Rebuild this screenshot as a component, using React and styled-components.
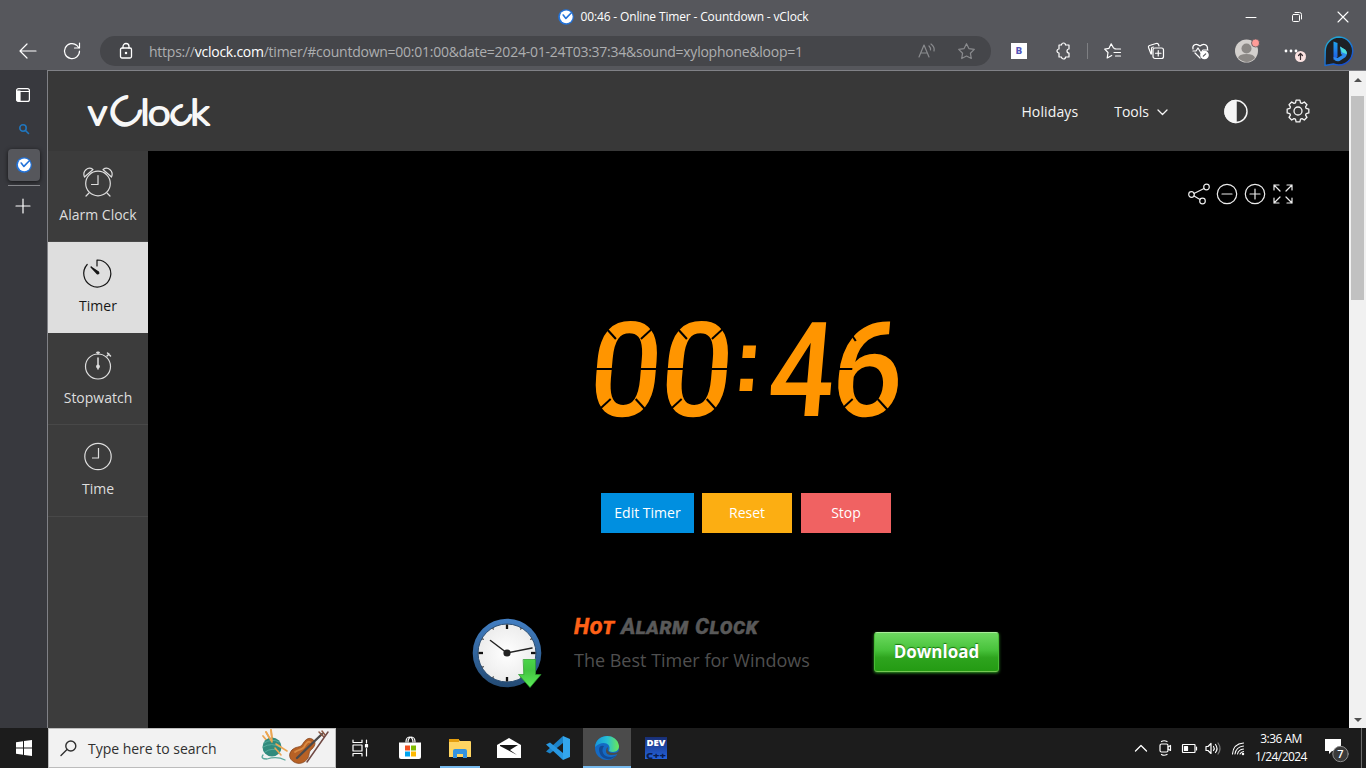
import React from "react";
import styled, { createGlobalStyle, css } from "styled-components";

const GlobalStyle = createGlobalStyle`
  * { box-sizing: border-box; }
  body { margin: 0; background: #000; overflow: hidden; font-family: "Open Sans", "Noto Sans", sans-serif; }
  svg { display: block; flex: none; overflow: visible; }
`;

const Screen = styled.div`
  width: 1366px; height: 768px; display: flex; flex-direction: column; overflow: hidden; color: #fff;
`;

/* ---------- browser chrome ---------- */
const TitleBar = styled.header`
  height: 34px; background: #56575c; display: grid; grid-template-columns: 1fr auto 1fr; align-items: center;
`;
const TitleText = styled.div`
  grid-column: 2; display: flex; align-items: center; gap: 7px; padding-bottom: 1px;
  font-size: 12px; letter-spacing: ${(p) => p.$track}px; white-space: nowrap; height: 32px;
`;
const WindowControls = styled.div`display: flex; justify-self: end; height: 32px;`;
const ControlCell = styled.div`width: 46px; display: flex; align-items: center; justify-content: center;`;

const Toolbar = styled.div`
  height: 36px; background: #56575c; display: flex; align-items: center; padding: 0 5px 2px 6px;
`;
const Cell = styled.div`
  width: ${(p) => p.$w || 44}px; height: 30px; flex: none; display: flex; align-items: center; justify-content: center;
  margin-left: ${(p) => p.$gap || 0}px;
`;
const AddressBar = styled.div`
  width: 891px; height: 30px; margin: 0 0 0 6px; border-radius: 15px; background: #45464a; display: flex; align-items: center;
  padding: 0 16px 0 20px;
`;
const Url = styled.div`
  flex: 1; margin-left: 17px; font-size: 14px; letter-spacing: -0.25px; color: #adaeb0; white-space: nowrap;
  span { color: #fff; }
`;
const AddressIcons = styled.div`display: flex; gap: 23px; align-items: center; color: #8a8b8e;`;
const Divider = styled.div`width: 1px; height: 16px; background: #7e7f83; margin: 0 3px 0 2px;`;
const ExtensionTile = styled.div`
  width: 16px; height: 16px; background: #fff; color: #5355b8; font: bold 9px/16px "DejaVu Sans", sans-serif; text-align: center;
`;

const Body = styled.div`height: 658px; display: flex;`;
const TabStrip = styled.nav`
  width: 47px; background: #38393e; display: flex; flex-direction: column; align-items: center; padding-top: 17px;
`;
const StripItem = styled.div`
  width: 32px; height: ${(p) => p.$h}px; padding-top: ${(p) => p.$drop || 0}px; padding-right: ${(p) => p.$pull || 0}px;
  display: flex; align-items: center; justify-content: center; flex: none;
  ${(p) => p.$active && css`background: #56575c; border-radius: 4px; box-shadow: 0 1px 4px rgba(0,0,0,.65);`}
`;
const StripRule = styled.div`width: 32px; height: 1px; background: #85868a; margin-top: 4px;`;

/* ---------- web page ---------- */
const Page = styled.div`
  width: 1302px; border-top: 1px solid #808186; border-left: 1px solid #808186; display: flex; flex-direction: column;
`;
const SiteHeader = styled.header`
  height: 80px; flex: none; background: #383838; display: flex; align-items: center; padding: 0 39px 0 36px;
`;
const SiteNav = styled.nav`
  margin-left: auto; display: flex; align-items: center; font-size: 14px; color: #f5f5f5;
`;
const NavLink = styled.span`
  display: flex; align-items: center; gap: 8px; margin-right: ${(p) => p.$after}px; letter-spacing: ${(p) => p.$track || 0}px;
`;
const Content = styled.div`flex: 1; display: flex; min-height: 0;`;
const SideMenu = styled.aside`width: 100px; background: #3c3c3c;`;
const MenuItem = styled.div`
  height: ${(p) => p.$h}px; border-bottom: 1px solid ${(p) => (p.$active ? "#dedede" : "#484848")};
  background: ${(p) => (p.$active ? "#dedede" : "transparent")}; color: ${(p) => (p.$active ? "#161616" : "#dedede")};
  display: flex; flex-direction: column; align-items: center; padding-top: ${(p) => p.$top || 16}px;
  font-size: 14px; line-height: 19px;
  span { margin-top: 8px; }
`;
const Stage = styled.main`flex: 1; background: #000; display: flex; flex-direction: column;`;
const ViewTools = styled.div`display: flex; justify-content: flex-end; gap: 6px; padding: 32px 55.5px 0 0; color: #ececec;`;
const Display = styled.div`margin: 116px 0 0 448px; height: 97px;`;
const Buttons = styled.div`display: flex; margin: 75px 0 0 453px;`;
const Button = styled.button`
  width: ${(p) => p.$w}px; height: 40px; border: 0; padding: 0 0 1px; margin-right: ${(p) => p.$after || 0}px;
  background: ${(p) => p.$bg}; color: #fff; font: 14px "Open Sans", sans-serif;
`;
const Promo = styled.section`display: flex; margin: 85px 0 0 325px;`;
const PromoCopy = styled.div`margin-left: 31px; width: 300px;`;
const PromoName = styled.div`
  font: italic 800 22px/24px "Roboto", sans-serif; font-variant: small-caps; color: #595959; white-space: nowrap;
  margin-top: -3px; margin-bottom: 1px; letter-spacing: 0.6px; -webkit-text-stroke: 0.4px currentColor;
  b { color: #ff6117; font-weight: inherit; }
`;
const PromoLine = styled.div`
  font-size: 18px; line-height: 24px; color: #4f4f4f; margin-top: 9px; white-space: nowrap;
`;
const Download = styled.button`
  width: 125px; height: 40px; margin-top: 14px; border: 1px solid #48bd36; border-top-color: #a8ed98; border-bottom-color: #74c752;
  border-radius: 3px; padding: 0 0 2px; background: linear-gradient(#6dda60, #48c23b 45%, #2ea41e 65%, #249b13);
  color: #fff; font: bold 17px "Open Sans", sans-serif; text-shadow: 0 -1px 1px #17750c; box-shadow: 0 1px 3px #2f9b24;
`;
const ScrollBar = styled.div`
  width: 17px; background: #f1f1f1; border-top: 1px solid #808186; display: flex; flex-direction: column; align-items: center;
`;
const Thumb = styled.div`width: 13px; height: 204px; background: #c1c1c1; margin-bottom: auto;`;
const Arrow = styled.div`
  width: 0; height: 0; border: 4px solid transparent; margin: ${(p) => (p.$up ? "3px 0 14px" : "0 0 2px")};
  ${(p) => (p.$up ? "border-bottom-color: #505050;" : "border-top-color: #505050;")}
`;

/* ---------- taskbar ---------- */
const TaskBar = styled.footer`height: 40px; background: #1c1c1c; display: flex; align-items: stretch;`;
const TaskCell = styled.div`
  width: ${(p) => p.$w}px; display: flex; align-items: center; justify-content: center; flex: none;
  background: ${(p) => (p.$active ? "#4b4b4b" : "transparent")};
  box-shadow: ${(p) => (p.$active ? "inset 0 -2px #76b9ed" : "none")};
`;
const RunningCell = styled(TaskCell)`
  background: linear-gradient(#76b9ed, #76b9ed) 50% 100% / 40px 2px no-repeat;
`;
const SearchBox = styled.div`
  width: 288px; background: #f2f2f2; border: 1px solid #bcbcbc; color: #303030; display: flex; align-items: center;
  padding: 0 4px 0 11px; font-size: 14px; letter-spacing: -0.02px;
  span { margin-left: 11px; margin-right: auto; }
`;
const Tray = styled.div`margin-left: auto; display: flex; align-items: center; padding-right: 4px;`;
const Clock = styled.div`
  width: 60px; text-align: center; font-size: 12px; line-height: 18px; letter-spacing: -0.55px; margin-right: 2px; white-space: nowrap;
`;
const DesktopEdge = styled.div`width: 1px; height: 40px; background: #6b6b6b;`;

const Icon = ({ w = 24, h = w, sw = 1.2, children }) => (
  <svg width={w} height={h} viewBox={`0 0 ${w} ${h}`} fill="none" stroke="currentColor" strokeWidth={sw} strokeLinecap="round" strokeLinejoin="round">
    {children}
  </svg>
);

const Favicon = () => (
  <Icon w={16} sw={0}>
    <circle cx="8" cy="8" r="7.8" fill="#2373d9" />
    <circle cx="8.3" cy="7.8" r="6.4" fill="#fff" />
    <path d="M5.2 6l2.7 3.4L13.6 3.5" stroke="#2373d9" strokeWidth="1.6" />
  </Icon>
);

const logoLetters = [
  ["v", 40, 19], ["l", 92.5, 9], ["o", 100, 22.500], ["k", 142.500, 19],
];

const Logo = () => (
  <svg width="130" height="40" viewBox="36 0 130 40" fill="#f7f7f7" stroke="#f7f7f7" strokeWidth="2.2" strokeLinejoin="round" fontFamily="Lato" fontWeight="300" fontSize="35">
    {logoLetters.map(([ch, x, width]) => (
      <text key={ch} x={x} y="33.5" textLength={width} lengthAdjust="spacingAndGlyphs">{ch}</text>
    ))}
    <g transform="rotate(-42 77 20)"><text x="60.5" y="34" fontSize="37.5" textLength="30" lengthAdjust="spacingAndGlyphs">C</text></g>
    <g transform="rotate(-42 132.5 25)"><text x="121.5" y="33.5" textLength="21" lengthAdjust="spacingAndGlyphs">c</text></g>
  </svg>
);

const digits = [
  { ch: "0", x: -6, w: 72 },
  { ch: "0", x: 65, w: 72 },
  { ch: "4", x: 173, w: 66 },
  { ch: "6", x: 236, w: 72 },
];
const cornerCuts = (x) => [
  [x + 5, 2, x + 21, 18], [x + 62, 2, x + 46, 18], [x + 5, 94, x + 21, 78], [x + 62, 94, x + 46, 78],
];
const sideCuts = (x) => [[x, 48, x + 20, 48], [x + 47, 48, x + 67, 48]];
const ledCuts = [...[-4, 67].flatMap(cornerCuts), ...[-3, 68].flatMap(sideCuts), ...cornerCuts(238).slice(2), [238, 48, 256, 48], [245, 4, 257, 20]];
const Led = () => (
  <svg width="304" height="97" viewBox="0 0 304 97">
    <g transform="translate(4.5 0) skewX(-5)">
      <g fill="#ff9500" fontFamily="Roboto" fontWeight="500" fontSize="132">
        {digits.map((d, i) => (
          <text key={i} x={d.x} y="95" textLength={d.w} lengthAdjust="spacingAndGlyphs">{d.ch}</text>
        ))}
        <text x="136.5" y="70" fontFamily="Liberation Sans" fontWeight="700" fontSize="90">:</text>
      </g>
      <g stroke="#000" strokeWidth="2">
        {ledCuts.map((c, i) => <line key={i} x1={c[0]} y1={c[1]} x2={c[2]} y2={c[3]} />)}
      </g>
    </g>
  </svg>
);

const gearPath = (() => {
  const pts = [];
  for (let i = 0; i < 8; i++) {
    [[-17, 8.6], [-10, 11], [10, 11], [17, 8.6]].forEach(([deg, r]) => {
      const a = ((i * 45 + deg) * Math.PI) / 180;
      pts.push(`${(12 + r * Math.sin(a)).toFixed(2)} ${(12 - r * Math.cos(a)).toFixed(2)}`);
    });
  }
  return `M${pts.join("L")}Z`;
})();

const ClockFace = () => (
  <Icon w={70} sw={0}>
    <defs>
      <linearGradient id="rim" x2="0" y2="1"><stop stopColor="#427fc4" /><stop offset="1" stopColor="#234a73" /></linearGradient>
      <radialGradient id="dial"><stop stopColor="#fff" /><stop offset="1" stopColor="#ececec" /></radialGradient>
      <linearGradient id="drop" x2="0" y2="1"><stop stopColor="#4ad548" /><stop offset=".4" stopColor="#43c541" /><stop offset="1" stopColor="#5cec59" /></linearGradient>
    </defs>
    <circle cx="34" cy="35" r="34.3" fill="url(#rim)" />
    <circle cx="34" cy="35" r="29" fill="url(#dial)" stroke="#2c4e72" strokeWidth="1" />
    {[...Array(12)].map((_, i) => (
      <line key={i} x1="34" x2="34" y1="6.5" y2={i % 3 ? 8 : 11} stroke="#111" strokeWidth={i % 3 ? 1 : 2.3} transform={`rotate(${i * 30} 34 35)`} strokeLinecap="butt" />
    ))}
    <path d="M17.5 22.5L34 35L59 30" stroke="#222" strokeWidth="1.5" />
    <circle cx="34" cy="35" r="3.6" fill="#222" />
    <path d="M50.5 41.5h12v15h5.5L57 69.5 45.5 56.5h5z" fill="url(#drop)" stroke="#2b9a2c" strokeWidth=".7" />
  </Icon>
);

const BingIcon = () => (
  <Icon w={30} h={31} sw={0}>
    <defs>
      <linearGradient id="ring" x2=".6" y2="1"><stop stopColor="#22b7d7" /><stop offset="1" stopColor="#174fd0" /></linearGradient>
      <linearGradient id="bingB" x2="0" y2="1"><stop stopColor="#20a4ed" /><stop offset="1" stopColor="#1f58e4" /></linearGradient>
    </defs>
    <path d="M15 1a14 14 0 1 1-5.5 27L1 29.500 1.200 15A14 14 0 0 1 15 1z" fill="#1d2025" stroke="url(#ring)" strokeWidth="1.4" />
    <path d="M9.500 5.500l4 1.500v14l-4 3z" fill="url(#bingB)" />
    <path d="M16 10.500l4.500 2.700c3 2 3.200 5.800.8 8L15.500 25c-3 1-6-.5-6-4l4 1 5-3-1.500-1z" fill="#2d8cee" />
    <path d="M16 10.500l4.500 2.700q2.800 2 2.300 5l-5-2z" fill="#4de0dc" />
  </Icon>
);

const SearchArt = () => (
  <Icon w={70} h={36} sw={0}>
    <path d="M5 2l8 14M10 0l2 14M2 6l10 12" stroke="#eca653" strokeWidth="1.8" />
    <circle cx="11" cy="17" r="9.5" fill="#318b7d" />
    <path d="M3 13q8-5 15-1M2 17q9-5 17 0M4 22q7-5 14-1" stroke="#5aae9f" strokeWidth=".9" />
    <path d="M5 2l6 10M10 0l1 11" stroke="#eca653" strokeWidth="1.6" />
    <path d="M15 14l11 7M14 18l6 7" stroke="#eca653" strokeWidth="1.6" />
    <path d="M2 25q-3 4 4 4 10-3 18 1" stroke="#5da99d" strokeWidth="1.3" />
    <path d="M31 20c4-4 7-2 10-5 3-5 6-8 10-6 4 2 4 6 0 10-4 3-2 5-4 9-3 5-9 7-14 4-5-3-6-8-2-12z" fill="#b76125" stroke="#7e3f1a" strokeWidth=".7" />
    <path d="M34 22c4-3 7-2 9-5 2-4 4-6 6-5" stroke="#d98a42" strokeWidth="1.8" />
    <path d="M36 28L61 4" stroke="#4b4a4b" strokeWidth="2.4" />
    <path d="M58 2l5 5M61 1l3 4" stroke="#8a5743" strokeWidth="1.5" />
    <path d="M67 2L46 32" stroke="#704944" strokeWidth="1.5" />
  </Icon>
);

export default function App() {
  return (
    <Screen>
      <GlobalStyle />
      <TitleBar>
        <TitleText $track={-0.15}><Favicon />00:46 - Online Timer - Countdown - vClock</TitleText>
        <WindowControls>
          <ControlCell><Icon w={10} sw={1}><path d="M0 5.500h10" /></Icon></ControlCell>
          <ControlCell><Icon w={10} sw={1}><rect x=".5" y="2.500" width="7" height="7" rx="1" /><path d="M3 .5h4.500q2 0 2 2V7" /></Icon></ControlCell>
          <ControlCell><Icon w={10} sw={1.1}><path d="M0 0l10 10M10 0L0 10" /></Icon></ControlCell>
        </WindowControls>
      </TitleBar>

      <Toolbar>
        <Cell><Icon w={16}><path d="M16 8H0M7 1L0 8l7 7" /></Icon></Cell>
        <Cell><Icon w={16}><path d="M15.500 8A7.500 7.500 0 1 1 13 2.500L15 5M15.500 0v5h-5" /></Icon></Cell>
        <AddressBar>
          <Icon w={12} h={16} sw={1.3}><rect x=".5" y="5" width="11" height="10" rx="1.500" /><path d="M3 5V3.500a3 3 0 0 1 6 0V5" /><circle cx="6" cy="10" r=".6" /></Icon>
          <Url>https://<span>vclock.com</span>/timer/#countdown=00:01:00&amp;date=2024-01-24T03:37:34&amp;sound=xylophone&amp;loop=1</Url>
          <AddressIcons>
            <Icon w={16}><path d="M0 14L5 2l5 12M2 10h6M10 3q2 2 1.500 4M12 1q4 3 3 7" /></Icon>
            <Icon w={17} h={16}><path d="M8.500.7l2.400 4.900 5.400.8-3.900 3.800.9 5.300-4.800-2.500-4.800 2.500.9-5.300L.7 6.400l5.400-.8z" /></Icon>
          </AddressIcons>
        </AddressBar>
        <Cell $gap={6}><ExtensionTile>B</ExtensionTile></Cell>
        <Cell><Icon w={14} h={16}><path d="M3 2h2.500a2 2 0 1 1 4 0H13v4a2 2 0 0 0 0 4v4H9.500a2 2 0 0 1-4 0H3v-4a2 2 0 1 1 0-4z" /></Icon></Cell>
        <Divider />
        <Cell $w={42}><Icon w={17} h={16}><path d="M11 5.500L9.500 5 7.200.8 5 5.300.7 6.100 4 9.500 3.200 15l4.500-2.500M11 6h5.500M10 9.500h6.500M11.500 13h5" /></Icon></Cell>
        <Cell $w={45}><Icon w={16}><path d="M3 11L.5 4.500Q0 3 1.500 2.500L8 .5q2-.6 2.500 1L11 3M3.500 11V6q0-2 2-2" /><rect x="5" y="5" width="10.500" height="10.500" rx="2" /><path d="M10.250 7.500v5.500M7.500 10.250H13" /></Icon></Cell>
        <Cell><Icon w={17} h={16}><path d="M1 6C0 2 4-.5 8 3c4-3.500 8-1 7.500 3M1 8h3l2-3 3 5 2-3h5M3 10l5 5" /><circle cx="12.500" cy="12" r="3.700" fill="#fff" /><path d="M11.300 13.200l2.400-2.400" stroke="#56575c" /></Icon></Cell>
        <Cell $gap={3}><Icon w={24} h={24} sw={0}><circle cx="11.500" cy="12" r="11.500" fill="#d3d0cd" /><circle cx="11.500" cy="9.500" r="5" fill="#8b8885" /><path d="M3 19q1-4 8.500-4t8.500 4q-8 8-17 0z" fill="#8b8885" /><circle cx="20.500" cy="4" r="4" fill="#ff9c98" stroke="#56575c" strokeWidth=".8" /></Icon></Cell>
        <Cell $gap={3}><Icon w={20} h={22} sw={0}><circle cx="2" cy="11" r="1.400" fill="#fff" /><circle cx="7" cy="11" r="1.400" fill="#fff" /><circle cx="12" cy="11" r="1.400" fill="#fff" /><circle cx="16.500" cy="16.500" r="5.500" fill="#fbe3e2" /><path d="M16.500 19.500v-6M14.500 15.500l2-2 2 2" stroke="#3b3033" strokeWidth="1.200" /></Icon></Cell>
        <Cell $gap={1}><BingIcon /></Cell>
      </Toolbar>

      <Body>
        <TabStrip>
          <StripItem $h={16} $pull={1}><Icon w={14} sw={1.2}><rect x=".6" y=".6" width="12.800" height="12.800" rx="2" /><path d="M1 3.500h12" /><path d="M1 3h3v10H2q-1 0-1-1z" fill="#fff" /></Icon></StripItem>
          <StripItem $h={46} $drop={6}><Icon w={10} sw={1.6}><g stroke="#2076be"><circle cx="4" cy="4" r="3.200" /><path d="M6.500 6.500l3 3" /></g></Icon></StripItem>
          <StripItem $h={32} $active><Favicon /></StripItem>
          <StripRule />
          <StripItem $h={40} $pull={1}><Icon w={14} sw={1.2}><path d="M7 0v14M0 7h14" /></Icon></StripItem>
        </TabStrip>

        <Page>
          <SiteHeader>
            <Logo />
            <SiteNav>
              <NavLink $after={36} $track={0.12}>Holidays</NavLink>
              <NavLink $after={56}>Tools<Icon w={11} h={4} sw={1.3}><path d="M1 1l4.500 4.500L10 1" /></Icon></NavLink>
              <NavLink $after={38}><Icon w={24} sw={1.5}><circle cx="12" cy="12.500" r="11" /><path d="M12 1.500a11 11 0 0 0 0 22z" fill="#f5f5f5" /></Icon></NavLink>
              <Icon w={24} sw={1.3}><path d={gearPath} /><circle cx="12" cy="12" r="4" /></Icon>
            </SiteNav>
          </SiteHeader>
          <Content>
            <SideMenu>
              <MenuItem $h={91}>
                <Icon w={30}><circle cx="15" cy="16.500" r="12.300" /><path d="M15 8.500v9H8.500M6 26l-3 3M24 26l3 3M1.500 10C-1 4 5-1 10 2.500zM28.500 10C31 4 25-1 20 2.500z" /></Icon>
                <span>Alarm Clock</span>
              </MenuItem>
              <MenuItem $h={91} $active>
                <Icon w={30}><path d="M14 8V2a13.500 13.500 0 1 1-9.800 4.500" /><path d="M8 9l7.500 5q1 2-1 2z" fill="currentColor" /></Icon>
                <span>Timer</span>
              </MenuItem>
              <MenuItem $h={92} $top={17}>
                <Icon w={30}><circle cx="15" cy="16.500" r="12.500" /><path d="M15 2v2M13.800 2.500h2.400M24 6l2-2M24.500 3l3 3M15 8v11" strokeWidth="1.500" /><circle cx="15" cy="16.500" r="1.300" fill="currentColor" /></Icon>
                <span>Stopwatch</span>
              </MenuItem>
              <MenuItem $h={92}>
                <Icon w={30}><circle cx="15" cy="15.500" r="13.200" /><path d="M15.500 7v10H9" strokeLinecap="butt" /></Icon>
                <span>Time</span>
              </MenuItem>
            </SideMenu>
            <Stage>
              <ViewTools>
                <Icon w={22}><circle cx="3.500" cy="11.500" r="2.800" /><circle cx="18.500" cy="4" r="2.800" /><circle cx="14.500" cy="18" r="2.800" /><path d="M6 10.500l10-5M6 13l6 3.500" /></Icon>
                <Icon w={22}><circle cx="11" cy="11" r="9.700" /><path d="M6 11h10" /></Icon>
                <Icon w={22}><circle cx="11" cy="11" r="9.700" /><path d="M6 11h10M11 6v10" /></Icon>
                <Icon w={22}><path d="M8 8L2 2v5M2 2h5M14 8l6-6v5M20 2h-5M8 14l-6 6v-5M2 20h5M14 14l6 6v-5M20 20h-5" /></Icon>
              </ViewTools>
              <Display><Led /></Display>
              <Buttons>
                <Button $w={93} $after={8} $bg="#008fe0">Edit Timer</Button>
                <Button $w={90} $after={9} $bg="#fcae12">Reset</Button>
                <Button $w={90} $bg="#f06262">Stop</Button>
              </Buttons>
              <Promo>
                <ClockFace />
                <PromoCopy>
                  <PromoName><b>Hot</b> Alarm Clock</PromoName>
                  <PromoLine>The Best Timer for Windows</PromoLine>
                </PromoCopy>
                <Download>Download</Download>
              </Promo>
            </Stage>
          </Content>
        </Page>
        <ScrollBar><Arrow $up /><Thumb /><Arrow /></ScrollBar>
      </Body>

      <TaskBar>
        <TaskCell $w={48}><Icon w={16} sw={0}><path d="M0 2.300L7 1.300v6.300H0zM8 1.100L16 0v7.600H8zM0 8.400h7v6.300l-7-1zM8 8.400h8V16l-8-1.100z" fill="#fff" /></Icon></TaskCell>
        <SearchBox>
          <Icon w={17} h={16} sw={1.4}><circle cx="10.800" cy="6" r="5" /><path d="M7 9.500L1 15.500" /></Icon>
          <span>Type here to search</span>
          <SearchArt />
        </SearchBox>
        <TaskCell $w={48}><Icon w={16} sw={1.2}><path d="M1 0v2.500h9V0M1 16v-2.500h9V16M14.500 0v3M14.500 8.500V16" /><rect x="1" y="5" width="9" height="6" /><rect x="13.500" y="4.500" width="2" height="2.500" fill="#fff" /></Icon></TaskCell>
        <TaskCell $w={52}><Icon w={24} sw={0}><path d="M8 6a3.500 5 0 0 1 7 0M10 6a3.500 5 0 0 1 7 0" stroke="#fff" strokeWidth="1.200" /><path d="M1 6.500h22V21q0 2-2 2H3q-2 0-2-2z" fill="#fff" /><path d="M7 9.500h5v5H7z" fill="#f25022" /><path d="M13 9.500h5v5h-5z" fill="#7fba00" /><path d="M7 15.500h5v5H7z" fill="#00a4ef" /><path d="M13 15.500h5v5h-5z" fill="#ffb900" /></Icon></TaskCell>
        <RunningCell $w={48}><Icon w={22} h={19} sw={0}><path d="M0 1q0-1 1-1h8l2 2h10q1 0 1 1v15H0z" fill="#ffd562" /><path d="M0 0h10v3H0z" fill="#e49e0e" /><path d="M4 19v-7q0-2 2-2h10q2 0 2 2v7h-4v-4H8v4z" fill="#3393df" /></Icon></RunningCell>
        <TaskCell $w={49}><Icon w={24} h={20} sw={0}><path d="M0 7L12 0l12 7v13H0z" fill="#fff" /><path d="M3 7h18l-8 5 7 5L3 8z" fill="#171717" /></Icon></TaskCell>
        <TaskCell $w={50}><Icon w={24} sw={0}><path d="M17 0l7 3v18l-7 3z" fill="#33a6ed" /><path d="M17 0v7L4 17.500 0 15.500z" fill="#1c83c9" /><path d="M17 24v-7L4 6.500 0 8.500z" fill="#2898e2" /></Icon></TaskCell>
        <TaskCell $w={48} $active>
          <Icon w={24} sw={0}>
            <defs>
              <linearGradient id="edgeTop"><stop stopColor="#1695db" /><stop offset=".5" stopColor="#27bfd3" /><stop offset="1" stopColor="#6bea55" /></linearGradient>
            </defs>
            <circle cx="12" cy="12" r="12" fill="#146ac4" />
            <path d="M0 11C1-3 22-4 24 10c0 6-6 7-10 5 3-8-7-11-14-4z" fill="url(#edgeTop)" />
            <path d="M9 10c-5 7 3 15 13 9-6 7-17 5-18-5q0-5 5-4z" fill="#124b96" />
            <path d="M13 11q-2 6 6 6 3 0 5-2l-1 3q-12 3-12-3 0-3 2-4z" fill="#4b4b4b" />
          </Icon>
        </TaskCell>
        <TaskCell $w={50}>
          <Icon w={22} sw={0}>
            <defs><linearGradient id="dev" x2="0" y2="1"><stop stopColor="#192f75" /><stop offset="1" stopColor="#2463dd" /></linearGradient></defs>
            <rect width="22" height="22" fill="url(#dev)" />
            <text x="11" y="9" textAnchor="middle" textLength="19" lengthAdjust="spacingAndGlyphs" fontFamily="Open Sans" fontWeight="800" fontSize="9" fill="#fff">DEV</text>
            <text x="11" y="21.500" textAnchor="middle" textLength="20" lengthAdjust="spacingAndGlyphs" fontFamily="Open Sans" fontWeight="800" fontSize="8.500" fill="#0a1c4d">C++</text>
          </Icon>
        </TaskCell>
        <Tray>
          <Cell $w={24}><Icon w={12} h={8} sw={1.3}><path d="M.5 7L6 1.500 11.500 7" /></Icon></Cell>
          <Cell $w={24}><Icon w={12} h={16}><rect x="1" y="4" width="8" height="8" rx="1.500" /><path d="M9 7l2.500-1.500v5L9 9M2.500 1.500Q5 0 8 1.500M2.500 14.500Q5 16 8 14.500" /></Icon></Cell>
          <Cell $w={25}><Icon w={15} h={9}><rect x=".5" y=".5" width="12.500" height="8" rx=".5" /><path d="M14.500 3v3" /><rect x="2.500" y="2.500" width="3" height="4" fill="#fff" /></Icon></Cell>
          <Cell $w={22}><Icon w={16} h={13}><path d="M1 4.500h2L6 1.500v10l-3-3H1zM8.500 4.500q1.500 2 0 4M10.500 2.500q3 4 0 8" /><path d="M13 1q4 5.500 0 11" stroke="#777" /></Icon></Cell>
          <Cell $w={27}><Icon w={12} h={13} sw={1.1}><path d="M.5 12Q1 2 11.500 1M3 12q1-7 8.500-8M5.500 12q1-4.500 6-5M8 12q1-2 3.500-2.500" /><circle cx="11" cy="12" r=".7" /></Icon></Cell>
          <Clock>3:36 AM<br />1/24/2024</Clock>
          <Cell $w={48}>
            <Icon w={24} h={26} sw={0}>
              <path d="M0 4h16v12H7l-3 3v-3H0z" fill="#fff" />
              <path d="M3 7h10M3 10h10M3 13h7" stroke="#222" />
              <circle cx="15.500" cy="19" r="7.700" fill="#3a3a3a" stroke="#8e8e8e" strokeWidth="1" />
              <text x="15.500" y="23" textAnchor="middle" fontFamily="Open Sans" fontSize="11" fontWeight="600" fill="#fff">7</text>
            </Icon>
          </Cell>
          <DesktopEdge />
        </Tray>
      </TaskBar>
    </Screen>
  );
}
